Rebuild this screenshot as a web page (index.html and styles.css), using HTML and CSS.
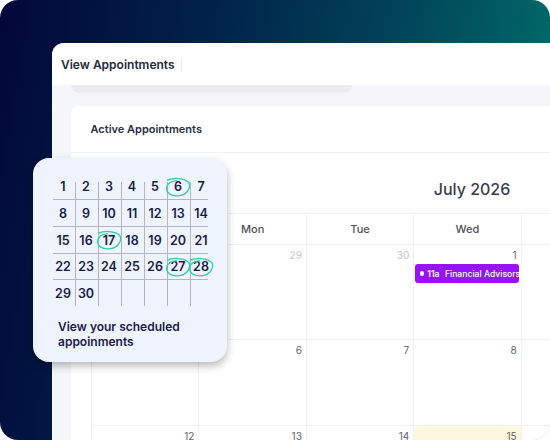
FILE: index.html
```html
<!DOCTYPE html>
<html lang="en">
<head>
<meta charset="utf-8">
<title>View Appointments</title>
<link rel="stylesheet" href="styles.css">
</head>
<body>
<div class="frame">
  <section class="panel">
    <header class="panel-head">
      <h1 class="panel-title">View Appointments</h1>
      <span class="divider"></span>
    </header>
    <div class="panel-body">
      <div class="tabs-stub"></div>
      <div class="card">
        <div class="card-head">Active Appointments</div>
        <div class="calendar">
          <h2 class="cal-title">July 2026</h2>
          <table class="month">
            <thead>
              <tr><th>Sun</th><th>Mon</th><th>Tue</th><th>Wed</th><th>Thu</th><th>Fri</th><th>Sat</th></tr>
            </thead>
            <tbody>
              <tr class="wk wk-1">
                <td class="other"><span class="num">28</span></td>
                <td class="other"><span class="num">29</span></td>
                <td class="other"><span class="num">30</span></td>
                <td><span class="num">1</span>
                  <div class="event"><span class="dot"></span><span class="ev-time">11a</span><span class="ev-name">Financial Advisors</span></div>
                </td>
                <td><span class="num">2</span></td>
                <td><span class="num">3</span></td>
                <td><span class="num">4</span></td>
              </tr>
              <tr class="wk">
                <td><span class="num">5</span></td>
                <td><span class="num">6</span></td>
                <td><span class="num">7</span></td>
                <td><span class="num">8</span></td>
                <td><span class="num">9</span></td>
                <td><span class="num">10</span></td>
                <td><span class="num">11</span></td>
              </tr>
              <tr class="wk">
                <td><span class="num">12</span></td>
                <td><span class="num">13</span></td>
                <td><span class="num">14</span></td>
                <td class="today"><span class="num">15</span></td>
                <td><span class="num">16</span></td>
                <td><span class="num">17</span></td>
                <td><span class="num">18</span></td>
              </tr>
            </tbody>
          </table>
        </div>
      </div>
    </div>
  </section>

  <aside class="mini">
    <div class="mini-grid">
      <span class="d">1</span><span class="d">2</span><span class="d">3</span><span class="d">4</span><span class="d">5</span>
      <span class="d marked">6<svg class="ring" viewBox="0 0 26 20"><path d="M2.5 3.2C8 0.6 19 0.6 23.6 5.4C26.6 9.8 22.6 18.4 13 18.8C5.4 19.1 1.2 15.4 1.6 11C2 6.8 6.2 4.2 11.5 3.6"/></svg></span>
      <span class="d">7</span>
      <span class="d">8</span><span class="d">9</span><span class="d">10</span><span class="d">11</span><span class="d">12</span><span class="d">13</span><span class="d">14</span>
      <span class="d">15</span><span class="d">16</span>
      <span class="d marked">17<svg class="ring" viewBox="0 0 26 20"><path d="M2.5 3.2C8 0.6 19 0.6 23.6 5.4C26.6 9.8 22.6 18.4 13 18.8C5.4 19.1 1.2 15.4 1.6 11C2 6.8 6.2 4.2 11.5 3.6"/></svg></span>
      <span class="d">18</span><span class="d">19</span><span class="d">20</span><span class="d">21</span>
      <span class="d">22</span><span class="d">23</span><span class="d">24</span><span class="d">25</span><span class="d">26</span>
      <span class="d marked">27<svg class="ring" viewBox="0 0 26 20"><path d="M2.5 3.2C8 0.6 19 0.6 23.6 5.4C26.6 9.8 22.6 18.4 13 18.8C5.4 19.1 1.2 15.4 1.6 11C2 6.8 6.2 4.2 11.5 3.6"/></svg></span>
      <span class="d marked">28<svg class="ring" viewBox="0 0 26 20"><path d="M2.5 3.2C8 0.6 19 0.6 23.6 5.4C26.6 9.8 22.6 18.4 13 18.8C5.4 19.1 1.2 15.4 1.6 11C2 6.8 6.2 4.2 11.5 3.6"/></svg></span>
      <span class="d">29</span><span class="d">30</span><span class="d"></span><span class="d"></span><span class="d"></span><span class="d"></span><span class="d"></span>
    </div>
    <p class="mini-caption">View your scheduled appoinments</p>
  </aside>
</div>
</body>
</html>
```

FILE: styles.css
```css
* {
  box-sizing: border-box;
}

html,
body {
  margin: 0;
  background: #ffffff;
}

body {
  font-family: Inter, "Noto Sans", "Liberation Sans", sans-serif;
}

/* outer rounded backdrop */
.frame {
  position: relative;
  width: 550px;
  height: 440px;
  overflow: hidden;
  border-radius: 18px;
  padding: 43px 0 0 52px;
  background: linear-gradient(100deg, #02073a 0%, #012349 35%, #01455a 65%, #00776d 100%);
}

/* app window */
.panel {
  width: 830px;
  height: 460px;
  border-top-left-radius: 12px;
  overflow: hidden;
  background: #f4f6fa;
}

.panel-head {
  height: 42px;
  display: flex;
  align-items: center;
  gap: 6px;
  padding-left: 9px;
  background: #ffffff;
}

.panel-title {
  margin: 0;
  font-size: 12px;
  font-weight: 600;
  color: #252a3c;
}

.divider {
  width: 1px;
  height: 13px;
  background: #e6e7ea;
}

.panel-body {
  padding-left: 19px;
}

.tabs-stub {
  width: 281px;
  height: 7.5px;
  border-radius: 0 0 8px 8px;
  background: #ececee;
}

.card {
  margin-top: 13.5px;
  background: #ffffff;
  border-top-left-radius: 8px;
}

.card-head {
  height: 47px;
  display: flex;
  align-items: center;
  padding-left: 19.5px;
  font-size: 11px;
  font-weight: 600;
  color: #2a2e3f;
  border-bottom: 1px solid #eef0f3;
}

.calendar {
  padding: 0 20px;
}

.cal-title {
  margin: 26px 0 14px;
  padding-right: 9px;
  height: 20px;
  line-height: 20px;
  text-align: center;
  font-size: 16px;
  font-weight: 500;
  color: #3a3c4a;
}

/* month grid */
.month {
  width: 753px;
  table-layout: fixed;
  border-collapse: collapse;
}

.month th,
.month td {
  border: 1px solid #edf0f4;
}

.month th {
  height: 31px;
  font-size: 11px;
  font-weight: 500;
  color: #50505c;
  text-align: center;
  vertical-align: middle;
}

.month td {
  vertical-align: top;
  text-align: right;
  padding: 3px 4px 0 1px;
  height: 86px;
}

.month .wk-1 td {
  height: 95px;
}

.num {
  display: block;
  height: 14px;
  line-height: 14px;
  font-size: 10px;
  color: #62626e;
}

.other .num {
  color: #c4c4cb;
}

.month td.today {
  background: #fef7dd;
}

.event {
  display: flex;
  align-items: center;
  height: 19px;
  margin: 2px -2.5px 0 -0.5px;
  padding-left: 5px;
  border-radius: 3px;
  background: #9712f7;
  color: #ffffff;
  font-size: 8.6px;
  font-weight: 500;
  white-space: nowrap;
  overflow: hidden;
  text-align: left;
}

.dot {
  flex: none;
  width: 4.5px;
  height: 4.5px;
  border-radius: 50%;
  background: #ffffff;
  margin-right: 3px;
}

.ev-time {
  margin-right: 5.5px;
  font-weight: 600;
}

/* floating mini calendar */
.mini {
  position: absolute;
  left: 33px;
  top: 158px;
  width: 194px;
  height: 204px;
  padding: 14.5px 0 0 18.5px;
  border-radius: 16px;
  background: #eef3fd;
  box-shadow: 0 4px 9px rgba(0, 0, 0, 0.28);
}

.mini-grid {
  display: grid;
  grid-template-columns: repeat(7, 23px);
  grid-auto-rows: 26.7px;
}

.mini-grid .d:nth-child(n + 36) {
  height: 25px;
}

.d {
  position: relative;
  display: flex;
  align-items: center;
  justify-content: center;
  padding-top: 2px;
  font-size: 12.5px;
  font-weight: 600;
  color: #171c46;
  background:
    linear-gradient(#b5b5ba, #b5b5ba) left top / 1px 100% no-repeat,
    linear-gradient(#b5b5ba, #b5b5ba) left top / 100% 1px no-repeat;
}

/* first row: short vertical ticks, no top rule */
.d:nth-child(-n + 7) {
  background: linear-gradient(#b5b5ba, #b5b5ba) left 9px / 1px calc(100% - 9px) no-repeat;
}

/* first column: top rule only */
.d:nth-child(7n + 1) {
  background: linear-gradient(#b5b5ba, #b5b5ba) 1px top / calc(100% - 1px) 1px no-repeat;
}

.d:nth-child(1) {
  background: none;
}

/* last column: rule stops short */
.d:nth-child(7n) {
  background:
    linear-gradient(#b5b5ba, #b5b5ba) left top / 1px 100% no-repeat,
    linear-gradient(#b5b5ba, #b5b5ba) left top / calc(100% - 5px) 1px no-repeat;
}

.d:nth-child(7) {
  background: linear-gradient(#b5b5ba, #b5b5ba) left 9px / 1px calc(100% - 9px) no-repeat;
}

.ring {
  position: absolute;
  left: 50%;
  top: 50%;
  width: 26px;
  height: 20px;
  margin: -9px 0 0 -13px;
  fill: none;
  stroke: #27d0a5;
  stroke-width: 1.3;
  stroke-linecap: round;
}

.mini-caption {
  margin: 13.5px 0 0 6.5px;
  font-size: 12px;
  line-height: 15px;
  font-weight: 600;
  color: #1b2048;
  width: 150px;
}
```
